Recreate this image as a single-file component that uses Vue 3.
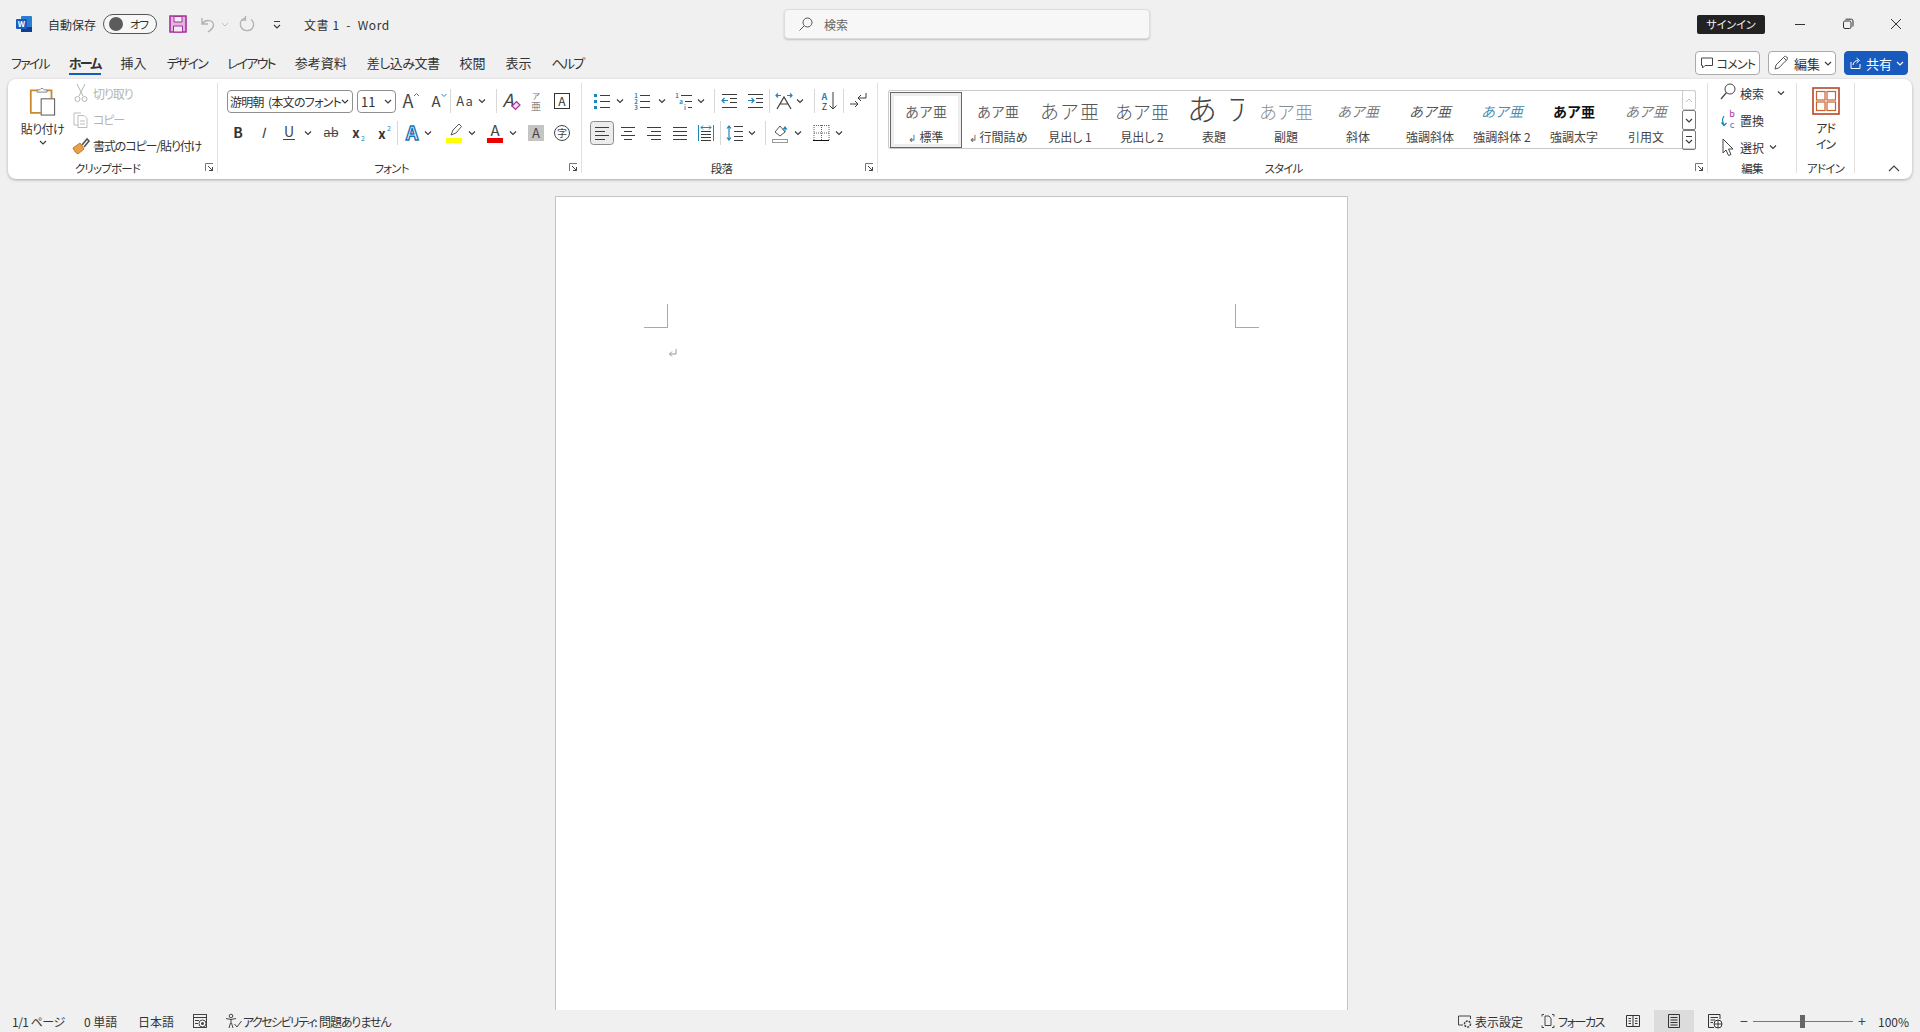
<template>
  <div class="word">
    <header class="title-bar">
      <svg class="word-logo" width="16" height="16" viewBox="0 0 16 16" v-html="icons.word"></svg>
      <span class="autosave">自動保存</span>
      <div class="toggle"><i class="knob"></i><span>オフ</span></div>
      <svg class="qa save" width="18" height="18" viewBox="0 0 18 18" v-html="icons.save"></svg>
      <svg class="qa undo" width="16" height="18" viewBox="0 0 16 18" v-html="icons.undo"></svg>
      <svg class="qa undo-more" width="8" height="18" viewBox="0 0 8 18" v-html="icons.chevLight"></svg>
      <svg class="qa redo" width="16" height="18" viewBox="0 0 16 18" v-html="icons.redo"></svg>
      <svg class="qa custom" width="10" height="18" viewBox="0 0 10 18" v-html="icons.customize"></svg>
      <span class="doc-name">文書 1&nbsp; -&nbsp; Word</span>
      <div class="search">
        <svg width="16" height="16" viewBox="0 0 16 16" v-html="icons.searchSmall"></svg>
        <span>検索</span>
      </div>
      <button class="signin">サインイン</button>
      <div class="win-btns">
        <svg width="12" height="12" viewBox="0 0 12 12" v-html="icons.min"></svg>
        <svg width="12" height="12" viewBox="0 0 12 12" v-html="icons.restore"></svg>
        <svg width="12" height="12" viewBox="0 0 12 12" v-html="icons.close"></svg>
      </div>
    </header>

    <div class="tab-bar">
      <nav class="tabs">
        <a v-for="t in tabs" :key="t.label" :class="[t.cls, { active: t.label === 'ホーム' }]">{{ t.label }}</a>
      </nav>
      <div class="actions">
        <button class="act comment">
          <svg width="14" height="14" viewBox="0 0 14 14" v-html="icons.comment"></svg><span>コメント</span>
        </button>
        <button class="act edit">
          <svg width="18" height="18" viewBox="0 0 18 18" v-html="icons.pencil"></svg>編集
          <svg width="8" height="18" viewBox="0 0 8 18" v-html="icons.chevSmall"></svg>
        </button>
        <button class="act share">
          <svg width="14" height="14" viewBox="0 0 14 14" v-html="icons.share"></svg>共有
          <svg width="8" height="18" viewBox="0 0 8 18" v-html="icons.chevWhite"></svg>
        </button>
      </div>
    </div>

    <section class="ribbon">
      <div class="group g-clip">
        <div class="group-body clip-body">
          <div class="paste">
            <svg width="27" height="30" viewBox="0 0 30 32" v-html="icons.paste"></svg>
            <span>貼り付け</span>
            <svg width="8" height="8" viewBox="0 0 8 8" v-html="icons.chevTiny"></svg>
          </div>
          <div class="clip-tools">
            <div class="clip-row off"><svg width="20" height="24" viewBox="0 0 20 24" v-html="icons.cut"></svg>切り取り</div>
            <div class="clip-row off"><svg width="20" height="24" viewBox="0 0 20 24" v-html="icons.copy"></svg>コピー</div>
            <div class="clip-row"><svg width="20" height="24" viewBox="0 0 20 24" v-html="icons.painter"></svg>書式のコピー/貼り付け</div>
          </div>
        </div>
        <div class="group-label">クリップボード</div>
        <svg class="launcher" width="9" height="9" viewBox="0 0 9 9" v-html="icons.launcher"></svg>
      </div>

      <div class="group g-font">
        <div class="group-body rows">
          <div class="row">
            <div class="combo font-name"><span>游明朝&nbsp; (本文のフォント</span><svg width="8" height="18" viewBox="0 0 8 18" v-html="icons.chevSmall"></svg></div>
            <div class="combo font-size"><span>11</span><svg width="8" height="18" viewBox="0 0 8 18" v-html="icons.chevSmall"></svg></div>
            <svg v-for="(t, i) in fontRow1" :key="i" :width="t.w" height="24" :viewBox="`0 0 ${t.w} 24`" :style="{ marginLeft: t.ml + 'px' }" v-html="icons[t.name]"></svg>
          </div>
          <div class="row">
            <svg v-for="(t, i) in fontRow2" :key="i" :width="t.w" height="24" :viewBox="`0 0 ${t.w} 24`" :style="{ marginLeft: t.ml + 'px' }" v-html="icons[t.name]"></svg>
          </div>
        </div>
        <div class="group-label">フォント</div>
        <svg class="launcher" width="9" height="9" viewBox="0 0 9 9" v-html="icons.launcher"></svg>
      </div>

      <div class="group g-para">
        <div class="group-body rows">
          <div class="row" v-for="(row, r) in paraRows" :key="r">
            <svg v-for="(t, i) in row" :key="i" :width="t.w" height="24" :viewBox="`0 0 ${t.w} 24`" :style="{ marginLeft: t.ml + 'px' }" v-html="icons[t.name]"></svg>
          </div>
        </div>
        <div class="group-label">段落</div>
        <svg class="launcher" width="9" height="9" viewBox="0 0 9 9" v-html="icons.launcher"></svg>
      </div>

      <div class="group g-styles">
        <div class="group-body">
          <div class="gallery">
            <div class="style-list">
              <div v-for="s in styles" :key="s.label" class="style-item" :class="{ selected: s.selected }">
                <div class="sample" :class="s.cls">{{ s.text || 'あア亜' }}</div>
                <div class="style-name"><span v-if="s.mark" class="para-mark">↲</span>{{ s.label }}</div>
              </div>
            </div>
            <div class="gallery-scroll">
              <i class="up"><svg width="8" height="18" viewBox="0 0 8 18" v-html="icons.chevUp"></svg></i>
              <i><svg width="8" height="18" viewBox="0 0 8 18" v-html="icons.chevSmall"></svg></i>
              <i><svg width="8" height="18" viewBox="0 0 8 18" v-html="icons.more"></svg></i>
            </div>
          </div>
        </div>
        <div class="group-label">スタイル</div>
        <svg class="launcher" width="9" height="9" viewBox="0 0 9 9" v-html="icons.launcher"></svg>
      </div>

      <div class="group g-edit">
        <div class="group-body edit-body">
          <div class="edit-row"><svg width="20" height="24" viewBox="0 0 20 24" v-html="icons.find"></svg>検索<svg class="edit-chev wide" width="8" height="24" viewBox="0 0 8 24" v-html="icons.chev"></svg></div>
          <div class="edit-row"><svg width="20" height="24" viewBox="0 0 20 24" v-html="icons.replace"></svg>置換</div>
          <div class="edit-row"><svg width="20" height="24" viewBox="0 0 20 24" v-html="icons.select"></svg>選択<svg class="edit-chev" width="8" height="24" viewBox="0 0 8 24" v-html="icons.chev"></svg></div>
        </div>
        <div class="group-label">編集</div>
      </div>

      <div class="group g-addin">
        <div class="group-body addin-body">
          <svg width="28" height="28" viewBox="0 0 28 28" v-html="icons.addin"></svg>
          <span>アド<br />イン</span>
        </div>
        <div class="group-label">アドイン</div>
      </div>

      <svg class="collapse" width="12" height="8" viewBox="0 0 12 8" v-html="icons.collapse"></svg>
    </section>

    <main class="canvas">
      <div class="page">
        <i class="crop crop-left"></i>
        <i class="crop crop-right"></i>
        <svg class="return" width="10" height="10" viewBox="0 0 10 10" v-html="icons.pilcrow"></svg>
      </div>
    </main>

    <footer class="status">
      <span class="st page-count">1/1 ページ</span>
      <span class="st words">0 単語</span>
      <span class="st lang">日本語</span>
      <svg class="st-macro" width="16" height="16" viewBox="0 0 16 16" v-html="icons.macro"></svg>
      <svg class="st-access" width="18" height="16" viewBox="0 0 18 16" v-html="icons.access"></svg>
      <span class="st access">アクセシビリティ:</span>
      <span class="st access-state">問題ありません</span>
      <div class="status-right">
        <svg width="16" height="16" viewBox="0 0 16 16" v-html="icons.display"></svg>
        <span class="st disp">表示設定</span>
        <svg class="focus-ic" width="16" height="16" viewBox="0 0 16 16" v-html="icons.focus"></svg>
        <span class="st foc">フォーカス</span>
        <svg class="read-ic" width="16" height="16" viewBox="0 0 16 16" v-html="icons.read"></svg>
        <div class="print-view"><svg width="16" height="16" viewBox="0 0 16 16" v-html="icons.print"></svg></div>
        <svg class="web-ic" width="16" height="16" viewBox="0 0 16 16" v-html="icons.web"></svg>
        <span class="zoom-sign minus">−</span>
        <div class="slider"><i></i></div>
        <span class="zoom-sign plus">+</span>
        <span class="st pct">100%</span>
      </div>
    </footer>
  </div>
</template>

<script setup>
const tabs = [
  { label: 'ファイル', cls: 'kana' },
  { label: 'ホーム', cls: 'kana' },
  { label: '挿入' },
  { label: 'デザイン', cls: 'kana' },
  { label: 'レイアウト', cls: 'kana' },
  { label: '参考資料' },
  { label: '差し込み文書', cls: 'mixed' },
  { label: '校閲' },
  { label: '表示' },
  { label: 'ヘルプ', cls: 'kana' },
]

const styles = [
  { label: '標準', cls: 's-normal', mark: true, selected: true },
  { label: '行間詰め', cls: 's-normal', mark: true },
  { label: '見出し 1', cls: 's-h1' },
  { label: '見出し 2', cls: 's-h2' },
  { label: '表題', cls: 's-title', text: 'あ ア' },
  { label: '副題', cls: 's-sub' },
  { label: '斜体', cls: 's-it' },
  { label: '強調斜体', cls: 's-it s-dark' },
  { label: '強調斜体 2', cls: 's-it s-blue' },
  { label: '強調太字', cls: 's-bold' },
  { label: '引用文', cls: 's-it' },
]

// row items: name, centre x on the window, width
function lay(start, list) {
  let x = start
  return list.map(([name, c, w = 20]) => {
    const left = c - w / 2
    const ml = left - x
    x = left + w
    return { name, w, ml }
  })
}

const fontRow1 = lay(396, [
  ['grow', 410], ['shrink', 437], ['sep', 450.5, 1], ['case', 465], ['chev', 482, 8], ['sep', 496.5, 1],
  ['clear', 511], ['ruby', 536], ['boxA', 562],
])
const fontRow2 = lay(218, [
  ['bold', 238], ['italic', 263], ['under', 289], ['chev', 308, 8], ['strike', 331], ['sub', 358], ['sup', 384],
  ['sep', 397.5, 1], ['effect', 412], ['chev', 428, 8], ['marker', 454], ['chev', 472, 8], ['fontColor', 495], ['chev', 513, 8],
  ['shade', 536], ['enclose', 562],
])
const paraRows = [
  lay(582, [
    ['bullets', 602], ['chev', 620, 8], ['numbers', 642], ['chev', 662, 8], ['multi', 684], ['chev', 701, 8], ['sep', 714.5, 1],
    ['outdent', 729], ['indent', 755], ['sep', 769.5, 1], ['asian', 784], ['chev', 800, 8], ['sep', 814.5, 1],
    ['sort', 829], ['sep', 843.5, 1], ['ltr', 858],
  ]),
  lay(582, [
    ['alignLeft', 602, 24], ['alignCenter', 628], ['alignRight', 654], ['justify', 680], ['distribute', 706], ['sep', 720.5, 1],
    ['spacing', 735], ['chev', 752, 8], ['sep', 765.5, 1], ['fill', 780], ['chev', 798, 8], ['borders', 821], ['chev', 839, 8],
  ]),
]

const D = '#3c3c3c'
const B = '#1b86bd'
const T = (x, y, s, str, fill = D, extra = '') =>
  `<text x="${x}" y="${y}" font-size="${s}" fill="${fill}" text-anchor="middle" ${extra}>${str}</text>`
const H = (x1, x2, y, c = D) => `<path d="M${x1} ${y}H${x2}" stroke="${c}" fill="none"/>`
const S = (d, c = D, w = 1) => `<path d="${d}" stroke="${c}" stroke-width="${w}" fill="none"/>`
const lines = (rows) => rows.map(([a, b, y]) => H(a, b, y)).join('')

const icons = {
  word: '<rect x="5" y="0" width="11" height="16" rx="1" fill="#2b7cd3"/><rect x="5" y="11" width="11" height="5" fill="#103f91"/><rect x="0" y="3" width="11" height="10" rx="1" fill="#185abd"/>' + T(5.5, 11, 8, 'W', '#fff', 'font-weight="700"'),
  save: '<path d="M1 1H17V17H1Z" fill="#e3b4df" stroke="#a3329d" stroke-width="1.6"/><path d="M5 1.5H13V7H5Z" fill="#f4f0f4" stroke="#a3329d"/><path d="M4.5 11H13.5V17H4.5Z" fill="#f4e8f3" stroke="#a3329d"/>',
  undo: S('M2 3V9H8M2.5 8.5C6 4 13 5 13.5 9.5C14 13 11 15 8 17', '#b3b3b3', 1.4),
  redo: S('M6 3C2 4.5 1 8 1.5 10.5C3 17 13 17.5 14.5 10.5C15 8 14 6 12 4.5', '#b3b3b3', 1.3) + S('M6.5 1V5H2.5', '#b3b3b3', 1.3),
  chevLight: S('M1 8L4 11L7 8', '#c0c0c0'),
  customize: H(2, 8, 6.5) + S('M2 10L5 13L8 10', D, 1.2),
  searchSmall: '<circle cx="9.5" cy="6.5" r="4.5" fill="none" stroke="#555"/>' + S('M6 10L1.5 14.5', '#555'),
  min: H(1, 11, 6.5, '#333'),
  restore: '<rect x="1.5" y="3" width="7.5" height="7.5" rx="1.5" fill="none" stroke="#333"/>' + S('M3.5 1.2H9.5Q11 1.2 11 3V8.5', '#333'),
  close: S('M1 1L11 11M11 1L1 11', '#333'),
  comment: S('M1.5 2H12.5V9.5H5L2.5 12V9.5H1.5Z', '#444'),
  pencil: S('M3 15L4 11L12.5 2.5Q13.5 1.8 14.8 3Q16 4.3 15.2 5.3L6.8 14Z', '#555') + S('M11.5 3.5L14.5 6.5', '#555'),
  share: S('M3 6V12.5H12V8', '#fff') + S('M5 9C5.5 6 7.5 4.5 10 4.5M8.5 2L11.5 4.5L8.5 7', '#fff'),
  chevSmall: S('M1 8L4 11L7 8', D, 1.2),
  chevWhite: S('M1 8L4 11L7 8', '#fff', 1.2),
  chevUp: S('M1 11L4 8L7 11', '#bbb'),
  more: H(1, 7, 5.5, D) + S('M1 9L4 12L7 9', D, 1.2),
  chevTiny: S('M1 2L4 5L7 2', D, 1.2),
  chev: S('M1 10.5L4 13.5L7 10.5', D, 1.2),
  launcher: '<path d="M.5 8V.5H8" stroke="#777" fill="none"/><path d="M3 3L7.5 7.5M7.5 4V7.5H4" stroke="#444" fill="none"/>',
  collapse: S('M1 7L6 2L11 7', '#444', 1.2),
  sep: '<path d="M.5 0V24" stroke="#d8d8d8"/>',
  paste: '<path d="M9 3H2V28H13" fill="#fff" stroke="#c98a2e" stroke-width="2"/><path d="M20 3H25V12" fill="none" stroke="#c98a2e" stroke-width="2"/><path d="M9 5V2.5H12Q14.5 -1 17 2.5H20V5Z" fill="#fff" stroke="#777"/><rect x="13.5" y="12.5" width="15" height="18" fill="#fff" stroke="#444"/>',
  cut: S('M6 3L12 15M14 3L8 15', '#b5b5b5') + '<circle cx="6.5" cy="18" r="2.5" fill="none" stroke="#b5b5b5"/><circle cx="13.5" cy="18" r="2.5" fill="none" stroke="#b5b5b5"/>',
  copy: S('M7 18H3V6H10', '#bdbdbd') + S('M7 8.5H13L16 11.5V20.5H7ZM9 14H14M9 17H14', '#bdbdbd'),
  painter: '<path d="M2 15L9 10L13 16L7 21Q4 20 2 15Z" fill="#e8a04a" stroke="#c9782a"/>' + S('M11 12L16 6L18 8L13 14', '#555', 1.6),
  grow: T(8, 19, 18, 'A', '#444') + S('M14 7L16.5 4.5L19 7', B),
  shrink: T(9, 18, 15, 'A', '#444') + S('M14.5 5L17 7.5L19.5 5', B),
  case: T(10, 17, 13, 'Aa', '#444', 'letter-spacing="1"'),
  clear: T(7, 18, 18, 'A', '#444', 'font-style="italic"') + '<path d="M11 17L15.5 12.5L19 16L14.5 20.5Z" fill="#f3dcf1" stroke="#a3329d" stroke-width="1.2"/>',
  ruby: T(10, 10, 8, 'ア', '#777') + T(10, 21, 10, '亜', '#8a8a8a'),
  boxA: '<rect x="2.5" y="4.5" width="15" height="15" fill="none" stroke="#333"/>' + T(10, 17, 12, 'A', '#333'),
  bold: T(10, 17, 14, 'B', '#333', 'font-weight="700"'),
  italic: T(10, 17, 14, 'I', '#444', 'font-style="italic"'),
  under: T(10, 16, 14, 'U', '#444') + H(4, 16, 18.5, '#444'),
  strike: T(10, 16, 13, 'ab', '#555') + H(3, 17, 12.5, '#444'),
  sub: T(8, 17, 13, 'x', '#333', 'font-weight="700"') + T(15, 20, 7, '2', B),
  sup: T(8, 18, 13, 'x', '#333', 'font-weight="700"') + T(15, 10, 7, '2', B),
  effect: T(10, 19, 19, 'A', '#fff', 'font-weight="700" stroke="#1a74b8" stroke-width="1.4"'),
  marker: S('M7 14L9 9L15 3L17.5 5.5L12 12L7 14Z', '#555') + '<rect x="2" y="17" width="16" height="5" fill="#ffff00"/>',
  fontColor: T(10, 15, 15, 'A', '#444') + '<rect x="2" y="17" width="16" height="5" fill="#ee0000"/>',
  shade: '<rect x="2" y="4" width="16" height="16" fill="#c4c4c4"/>' + T(10, 17, 13, 'A', '#444'),
  enclose: '<circle cx="10" cy="12" r="7.5" fill="none" stroke="#444"/>' + T(10, 15.5, 10, '字', '#444'),
  bullets: [6.5, 12.5, 18.5].map((y) => `<rect x="2" y="${y - 1.5}" width="3" height="3" fill="${B}"/>` + H(8, 18, y)).join(''),
  numbers: T(4, 9, 6, '1', B, 'font-weight="700"') + T(4, 15, 6, '2', B, 'font-weight="700"') + T(4, 21, 6, '3', B, 'font-weight="700"') + lines([[8, 18, 6.5], [8, 18, 12.5], [8, 18, 18.5]]),
  multi: T(3, 9, 6, '1', B, 'font-weight="700"') + T(7, 15, 6, 'a', B, 'font-weight="700"') + T(11, 21, 6, 'i', B, 'font-weight="700"') + lines([[7, 18, 6.5], [11, 18, 12.5], [14, 18, 18.5]]),
  outdent: lines([[3, 18, 5.5], [11, 18, 9.5], [11, 18, 13.5], [3, 18, 18.5]]) + S('M9 11.5H3M5.5 9L3 11.5L5.5 14', B, 1.2),
  indent: lines([[3, 18, 5.5], [11, 18, 9.5], [11, 18, 13.5], [3, 18, 18.5]]) + S('M3 11.5H9M6.5 9L9 11.5L6.5 14', B, 1.2),
  asian: S('M2 6.5H7M4 4.5L2 6.5L4 8.5M13 6.5H18M16 4.5L18 6.5L16 8.5', B, 1.2) + S('M3 20L10 8L17 20M6 15H14', D, 1.2),
  sort: T(5.5, 11, 9, 'A', B, 'font-weight="700"') + T(5.5, 21, 9, 'Z', D) + S('M14 3V20M10.5 16.5L14 20L17.5 16.5', D),
  ltr: S('M2 15H10M7 12L10 15L7 18', D) + S('M18 4V9H10M13 6L10 9L13 12', D),
  alignLeft: '<rect x=".5" y="0.5" width="23" height="23" rx="3" fill="#ececec" stroke="#8a8a8a"/>' + lines([[5, 19, 6.5], [5, 15, 10.5], [5, 19, 14.5], [5, 15, 18.5]]),
  alignCenter: lines([[3, 17, 6.5], [6, 14, 10.5], [3, 17, 14.5], [6, 14, 18.5]]),
  alignRight: lines([[3, 17, 6.5], [7, 17, 10.5], [3, 17, 14.5], [7, 17, 18.5]]),
  justify: lines([[3, 17, 6.5], [3, 17, 10.5], [3, 17, 14.5], [3, 17, 18.5]]),
  distribute: S('M2.5 4V20M17.5 4V20', B) + S('M5 6.5H15M7 4.5L5 6.5L7 8.5M13 4.5L15 6.5L13 8.5', B) + lines([[5, 15, 10.5], [5, 15, 13.5], [5, 15, 16.5], [5, 15, 19.5]]),
  spacing: S('M4 5V19M2 7.5L4 5L6 7.5M2 16.5L4 19L6 16.5', B, 1.2) + lines([[9, 18, 5.5], [9, 18, 10.5], [9, 18, 15.5], [9, 18, 19.5]]),
  fill: S('M5 11L10 5L15 11L10 15Z', '#555') + S('M15 11V7M13 8.5L15 6L17 8.5', B, 1.2) + '<rect x="2.5" y="18.5" width="15" height="3" fill="#fff" stroke="#999"/>',
  borders: '<path d="M3 4.5H18M3 12H18M10.5 4V19M3 4V19M18 4V19" stroke="#666" stroke-dasharray="1 1" fill="none"/>' + H(2, 18, 19.5, '#111'),
  find: '<circle cx="12" cy="8" r="5" fill="none" stroke="#444"/>' + S('M8.5 11.5L3 18', '#444', 1.2),
  replace: T(14, 9, 9, 'b', '#a3329d') + T(14, 20, 9, 'c', B) + S('M6 8Q3 12 6 17M3.5 14.5L6 17.5L8.5 15', B, 1.2),
  select: '<path d="M5 4L15 14H10.5L13 19.5L10.5 20.5L8 15L5 18Z" fill="#fff" stroke="#444"/>',
  addin: '<rect x="1" y="1" width="26" height="26" fill="none" stroke="#b7472a" stroke-width="1.6"/><g fill="none" stroke="#c9622f" stroke-width="1.2"><rect x="4.5" y="4.5" width="8.5" height="8.5"/><rect x="15" y="4.5" width="8.5" height="8.5"/><rect x="4.5" y="15" width="8.5" height="8.5"/><rect x="15" y="15" width="8.5" height="8.5"/></g>',
  pilcrow: S('M8 1V6H1.5M4 3.5L1.5 6L4 8.5', '#999'),
  macro: '<rect x="1.5" y="1.5" width="13" height="13" fill="none" stroke="#444"/>' + H(1, 15, 4.5) + H(3, 7, 7.5) + H(3, 6, 10.5) + '<circle cx="10.5" cy="10.5" r="3.5" fill="#fff" stroke="#444"/><circle cx="10.5" cy="10.5" r="1.5" fill="#444"/>',
  access: '<circle cx="6" cy="3" r="1.8" fill="none" stroke="#444"/>' + S('M1 5.5L6 6.5L11 5.5M6 6.5V10M4 15L5.5 10M8 15L6.5 10', '#444') + S('M9.5 11L12 14L16.5 8', '#444'),
  display: S('M6 12H1.5V3H13.5V6', '#444') + '<circle cx="10.5" cy="11" r="3" fill="none" stroke="#444" stroke-width="1.5" stroke-dasharray="2 1"/>',
  focus: S('M4 1.5H2V3.5M12 1.5H14V3.5M2 12.5V14.5H4M14 12.5V14.5H12', '#444') + S('M5 3H9L11 5.5V12.5H5Z', '#444'),
  read: S('M8 3V14M1.5 2.5H14.5V13.5H1.5ZM3.5 5.5H6M3.5 8H6M3.5 10.5H6M10 5.5H12.5M10 8H12.5M10 10.5H12.5', '#333'),
  print: S('M2.5 1.5H13.5V14.5H2.5ZM4.5 4.5H11.5M4.5 7H11.5M4.5 9.5H11.5M4.5 12H11.5', '#333'),
  web: S('M7 14.5H1.5V1.5H13V6M3.5 4.5H11M3.5 7H8M3.5 9.5H6', '#333') + '<circle cx="11" cy="11" r="4" fill="#fff" stroke="#333"/>' + S('M7 11H15M11 7V15', '#333'),
}
</script>

<style scoped>
.word { width: 1920px; height: 1032px; display: flex; flex-direction: column; background: #f0f0f0; color: #333; font-family: "Noto Sans CJK JP", "Noto Sans", sans-serif; font-size: 12px; font-feature-settings: "palt"; overflow: hidden; }
svg { display: block; flex-shrink: 0; overflow: visible; }

.title-bar { height: 48px; flex-shrink: 0; display: flex; align-items: center; }
.word-logo { margin-left: 16px; }
.autosave { margin-left: 16px; width: 48px; white-space: nowrap; }
.toggle { margin-left: 7px; width: 54px; height: 20px; box-sizing: border-box; border: 1px solid #555; border-radius: 10px; display: flex; align-items: center; background: #f7f7f7; }
.toggle span { margin-left: 7px; font-size: 11.5px; letter-spacing: -1.2px; }
.knob { width: 14px; height: 14px; margin-left: 5px; border-radius: 50%; background: #5c5c5c; }
.qa.save { margin-left: 12px; }
.qa.undo { margin-left: 13px; }
.qa.undo-more { margin-left: 5px; }
.qa.redo { margin-left: 10px; }
.qa.custom { margin-left: 17px; }
.doc-name { margin-left: 22px; width: 100px; white-space: nowrap; letter-spacing: .6px; }
.search { margin-left: 380px; width: 366px; height: 30px; box-sizing: border-box; padding-left: 13px; display: flex; align-items: center; gap: 10px; background: #f7f7f7; border: 1px solid #ddd; border-radius: 4px; box-shadow: 0 1px 2px rgba(0, 0, 0, .2); color: #666; }
.signin { margin-left: 547px; width: 68px; height: 19px; padding: 0; border: none; border-radius: 2px; background: #222; color: #f2f2f2; font: inherit; font-size: 11px; font-feature-settings: "palt"; }
.win-btns { margin-left: 29px; display: flex; gap: 36px; }

.tab-bar { height: 30px; flex-shrink: 0; display: flex; align-items: center; justify-content: space-between; }
.tabs { margin-left: 11px; display: flex; gap: 20px; font-size: 13px; }
.tabs a { line-height: 22px; position: relative; white-space: nowrap; }
.tabs a.kana { letter-spacing: -1.8px; }
.tabs a.mixed { letter-spacing: -.5px; }
.tabs a.active { font-weight: 700; }
.tabs a.active::after { content: ""; position: absolute; left: 0; right: 0; bottom: -1px; height: 2px; background: #185abd; }
.actions { display: flex; gap: 8px; margin-right: 12px; }
.act { height: 24px; padding: 0; box-sizing: border-box; border: 1px solid #aaa; border-radius: 4px; background: #fff; color: #333; font: inherit; font-feature-settings: "palt"; display: flex; align-items: center; justify-content: center; }
.comment { width: 65px; gap: 3px; }
.comment span { letter-spacing: -.8px; }
.edit { width: 68px; gap: 4px; font-size: 13px; }
.share { width: 64px; gap: 4px; background: #185abd; border-color: #185abd; color: #fff; font-size: 13px; }

.ribbon { position: relative; flex-shrink: 0; margin: 1px 8px 0 8px; height: 100px; background: #fff; border-radius: 8px; box-shadow: 0 1px 3px rgba(0, 0, 0, .3); display: flex; padding-top: 4px; box-sizing: border-box; }
.group { position: relative; height: 90px; box-sizing: border-box; border-right: 1px solid #e0e0e0; display: flex; flex-direction: column; flex-shrink: 0; }
.group-body { height: 80px; }
.group-label { height: 10px; line-height: 10px; text-align: center; font-size: 11.5px; white-space: nowrap; letter-spacing: -.8px; }
.launcher { position: absolute; right: 3px; bottom: 1px; }
.g-clip { width: 210px; }
.g-clip .group-label { padding-right: 10px; }
.g-font { width: 364px; }
.g-para { width: 296px; }
.g-font .group-label, .g-para .group-label { padding-right: 16px; }
.g-styles { width: 830px; }
.g-styles .group-label { padding-right: 18px; }
.g-edit { width: 89px; }
.g-addin { width: 58px; }

.clip-body { display: flex; }
.paste { margin-left: 6px; width: 57px; padding-top: 4px; box-sizing: border-box; display: flex; flex-direction: column; align-items: center; }
.paste span { margin-top: 3px; line-height: 18px; white-space: nowrap; letter-spacing: -.5px; }
.paste svg:last-child { margin-top: 1px; }
.clip-tools { display: flex; flex-direction: column; gap: 2px; margin-top: -2px; }
.clip-row { height: 24px; display: flex; align-items: center; gap: 2px; white-space: nowrap; letter-spacing: -1.1px; }
.clip-row.off { color: #b4b4b4; }

.rows { padding-top: 6px; box-sizing: border-box; display: flex; flex-direction: column; gap: 8px; }
.row { height: 24px; display: flex; align-items: center; }
.combo { height: 23px; box-sizing: border-box; border: 1px solid #8f8f8f; border-radius: 4px; display: flex; align-items: center; justify-content: space-between; padding: 0 3px; white-space: nowrap; overflow: hidden; }
.font-name { width: 126px; margin-left: 9px; padding-left: 2px; font-size: 12px; }
.font-name span { letter-spacing: -.7px; }
.font-size { width: 39px; margin-left: 4px; font-size: 13px; }

.gallery { margin: 7px 0 0 10px; width: 808px; height: 59px; box-sizing: border-box; display: flex; border: 1px solid #c9c9c9; border-right: none; border-radius: 3px; }
.style-list { width: 794px; display: flex; }
.style-item { width: 72px; flex-shrink: 0; height: 57px; box-sizing: border-box; text-align: center; overflow: hidden; color: #444; }
.style-item.selected { border: 1px solid #666; box-shadow: inset 0 0 0 3px #eee; margin: 1px 0 0 1px; height: 56px; }
.sample { height: 37px; line-height: 40px; font-size: 14px; white-space: nowrap; color: #666; overflow: hidden; font-feature-settings: normal; }
.style-item.selected .sample { margin-top: -2px; }
.s-h1 { font-size: 19px; letter-spacing: 1px; font-weight: 300; color: #555; }
.s-h2 { font-size: 18px; font-weight: 300; color: #555; }
.s-title { font-size: 30px; line-height: 33px; word-spacing: 3px; font-weight: 300; margin: 0 6px 0 9px; text-align: left; color: #444; }
.s-sub { font-size: 18px; font-weight: 300; color: #8c8c8c; }
.s-it { font-style: italic; color: #7a7a7a; }
.s-dark { color: #555; }
.s-blue { color: #4b8cb0; }
.s-bold { font-weight: 700; color: #111; }
.style-name { font-size: 12px; line-height: 18px; white-space: nowrap; }
.para-mark { font-size: 10px; margin-right: 3px; color: #666; }
.gallery-scroll { width: 14px; flex-shrink: 0; display: flex; flex-direction: column; margin-top: -1px; height: 59px; }
.gallery-scroll i { height: 20px; box-sizing: border-box; border: 1px solid #7a7a7a; border-radius: 2px; display: flex; align-items: center; justify-content: center; }
.gallery-scroll i.up { border-color: #ccc; }

.edit-body { margin: -2px 0 2px; display: flex; flex-direction: column; gap: 3px; padding-left: 10px; }
.edit-row { height: 24px; display: flex; align-items: center; gap: 2px; }
.edit-chev { margin-left: 3px; }
.edit-chev.wide { margin-left: 11px; }

.addin-body { padding-top: 4px; box-sizing: border-box; display: flex; flex-direction: column; align-items: center; }
.addin-body span { margin-top: 5px; line-height: 16px; text-align: center; letter-spacing: -1px; }
.collapse { position: absolute; right: 12px; bottom: 7px; }

.canvas { flex: 1; min-height: 0; overflow: hidden; padding-top: 17px; padding-left: 555px; }
.page { position: relative; width: 793px; height: 1123px; box-sizing: border-box; background: #fff; border: 1px solid #c4c4c4; }
.crop { position: absolute; top: 107px; width: 23px; height: 23px; border-bottom: 1px solid #aaa; }
.crop-left { left: 88px; border-right: 1px solid #aaa; }
.crop-right { left: 679px; border-left: 1px solid #aaa; }
.return { position: absolute; left: 112px; top: 151px; }

.status { height: 22px; flex-shrink: 0; display: flex; align-items: center; background: #f0f0f0; }
.st { white-space: nowrap; }
.page-count { margin-left: 12px; width: 51px; letter-spacing: -.5px; }
.words { margin-left: 21px; width: 34px; }
.lang { margin-left: 20px; width: 35px; }
.st-macro { margin-left: 19px; }
.st-access { margin-left: 17px; }
.access { margin-left: 0; width: 72px; letter-spacing: -1.6px; }
.access-state { margin-left: 4px; letter-spacing: -1.1px; }
.status-right { margin-left: auto; margin-right: 10px; display: flex; align-items: center; }
.disp { margin-left: 2px; width: 48px; }
.focus-ic { margin-left: 17px; }
.foc { margin-left: 2px; width: 45px; letter-spacing: -1.4px; }
.read-ic { margin-left: 22px; }
.print-view { margin-left: 13px; width: 40px; height: 22px; display: flex; align-items: center; justify-content: center; background: #dcdcdc; }
.web-ic { margin-left: 13px; }
.zoom-sign { width: 10px; text-align: center; font-size: 14px; color: #444; }
.minus { margin-left: 16px; }
.slider { position: relative; margin-left: 4px; width: 100px; height: 1px; background: #777; }
.slider i { position: absolute; left: 47px; top: -6px; width: 5px; height: 13px; background: #666; }
.plus { margin-left: 4px; }
.pct { margin-left: 11px; width: 32px; }
</style>

<style>
body { margin: 0; background: #f0f0f0; overflow: hidden; }
</style>
